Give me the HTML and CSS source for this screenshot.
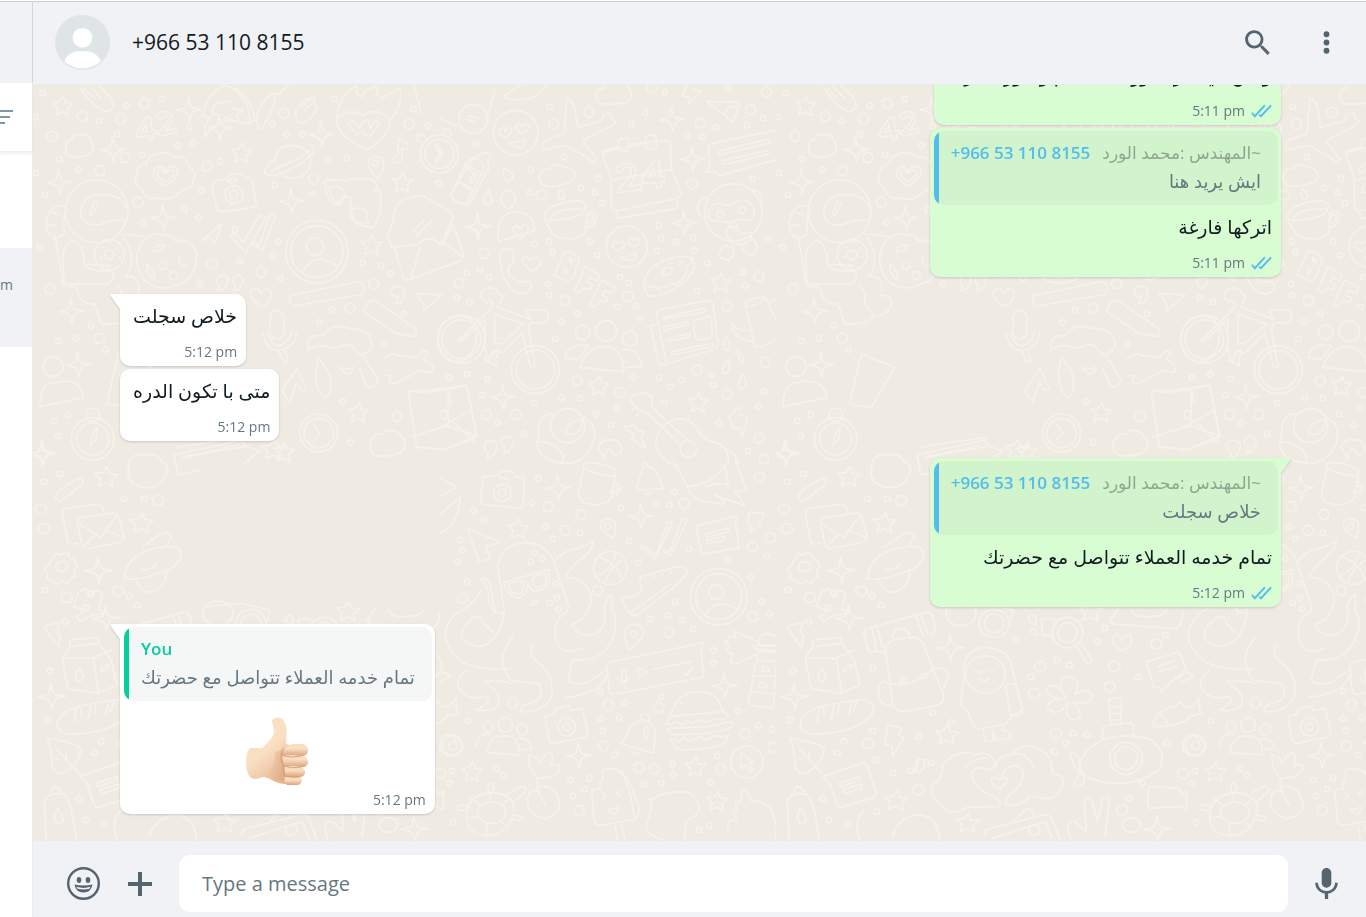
FILE: index.html
```html
<!DOCTYPE html>
<html lang="en">
    <head>
        <meta charset="utf-8">
        <title>+966 53 110 8155</title>

        <link rel="stylesheet" href="styles.css">
    </head>

    <body>

        <!-- edge of the chat list -->
        <aside class="sidebar">
            <div class="sidebar-header"></div>
            <div class="sidebar-search">
                <button class="icon-button filter-button" aria-label="Filter chats">
                    <svg width="13" height="16" viewBox="0 0 13 16"><path d="M0 2h13M0 8h10M0 14h5"/></svg>
                </button>
            </div>
            <div class="sidebar-item"></div>
            <div class="sidebar-item selected"><span>m</span></div>
        </aside>

        <main class="chat">
            <header class="chat-header">
                <svg class="avatar" viewBox="0 0 55 55">
                    <clipPath id="avatar-clip"><circle cx="27.5" cy="27.5" r="26"/></clipPath>
                    <circle cx="27.5" cy="27.5" r="27.5" fill="#dfe5e7"/>
                    <circle cx="27.5" cy="22.7" r="9.8" fill="#fff"/>
                    <path clip-path="url(#avatar-clip)" d="M9 46.5C12 39 18 36 27.5 36S43 39 46 46.5V55H9z" fill="#fff"/>
                </svg>
                <h1>+966 53 110 8155</h1>
                <button class="icon-button" aria-label="Search">
                    <svg width="33" height="33" viewBox="0 0 24 24"><path d="M15.9 14.3H15L14.7 14c1-1.1 1.6-2.7 1.6-4.3C16.3 6 13.3 3 9.6 3S3 6 3 9.7s3 6.7 6.7 6.7c1.6 0 3.2-.6 4.3-1.6l.3.3v.8l5.1 5.1 1.5-1.5zM9.7 14.3a4.6 4.6 0 1 1 0-9.2 4.6 4.6 0 0 1 0 9.2z"/></svg>
                </button>
                <button class="icon-button" aria-label="Menu">
                    <svg width="33" height="33" viewBox="0 0 24 24"><circle cx="12" cy="6" r="2.1"/><circle cx="12" cy="12" r="2.1"/><circle cx="12" cy="18" r="2.1"/></svg>
                </button>
            </header>

            <section class="messages">
                <!-- wallpaper: one tile, repeated to the right -->
                <svg class="wallpaper" aria-hidden="true">
                    <defs>
                        <marker id="dot" markerUnits="userSpaceOnUse" markerWidth="30" markerHeight="30" refX="15" refY="15"><circle class="doodle" cx="15" cy="15" r="8"/></marker>
                        <marker id="ring" markerUnits="userSpaceOnUse" markerWidth="44" markerHeight="44" refX="22" refY="22"><circle class="doodle" cx="22" cy="22" r="15"/></marker>
                        <marker id="star" markerUnits="userSpaceOnUse" markerWidth="80" markerHeight="80" refX="40" refY="40"><path class="doodle" d="M42 9l7 20 22 2-17 15 4 22-19-12-20 10 6-22-16-15 22-3z"/></marker>
                        <marker id="spark" markerUnits="userSpaceOnUse" markerWidth="90" markerHeight="90" refX="45" refY="45"><path class="doodle" d="M43 8q3 30 12 33l27 5q-25 3-29 11l-8 27q-2-25-11-28L8 47q26-3 29-10z"/></marker>
                        <pattern id="doodles" width="743" height="758" patternUnits="userSpaceOnUse">
                            <!-- upper left -->
                            <g class="doodle" transform="translate(-3 -1) scale(.3333)">
                                <path class="rings" d="M157 98L343 58 272 105 66 157 285 220 209 260 531 247 851 285 325 355 1137 120 545 540 693 565 1031 600 60 615 208 763 1101 998 763 88 960 673"/>
                                <path class="dots" d="M38 27L395 45 478 128 262 150 489 178 444 184 88 225 147 257 336 212 571 232 15 100 728 120 771 150 818 150 913 45 1151 75 1193 125 895 230 950 222 734 303 846 330 514 320 464 376 507 402 340 417 615 437 745 472 730 515 630 530 510 600 751 583 29 490 45 332 18 268 290 65 207 110 1226 298 1082 570 998 537 1053 545 85 770 137 763 183 725 227 797 1062 780 1121 690 1257 880 1312 870 939 952 961 1075 868 715 907 677 113 992 73 1010 84 1057"/>
                                <path class="stars" d="M98 67L635 208 1118 297 1025 485 985 987 762 1105"/>
                                <path class="sparks" d="M478 75L250 195 570 130 875 150 88 292 785 350 400 400 125 680 145 840 1345 425 40 1105"/>
                                <!-- meteor, cloud, 42, badge -->
                                <path d="M150 10Q180 55 210 75Q235 90 250 70Q250 40 205 5M165 15l30 30M180 8l35 35M110 200q-10-30 15-33q5-20 30-15q30 2 28 22q15 25-5 38q-45 15-68-2q-8-10 0-30z"/>
                                <path d="M350 100l-32 48 4 12 34-6 4 14 12-3-2-14 12-2-2-10-13 1-5-40zM348 122l3 20-17 3zM378 98q15-24 42-10q20 20-15 52l32-8 3 14-52 10q-6-8 4-18q26-25 26-36q-12-10-24 4z"/>
                                <path d="M365 215q40-20 70 5q35-5 38 25q30 20 17 45q-2 28-32 27q-35 40-70 25q-45 10-52-28q-28-15-18-42q5-32 32-32q-2-18 15-25z"/>
                                <path d="M405 305q-45-25-32-48q14-20 33 4q16-24 36-6q10 25-37 50zM407 293q-32-20-23-32q12-10 22 9q14-20 26-8q5 13-25 31z"/>
                                <!-- camera, planet, rocket, dart -->
                                <path d="M560 290l30-5 5-12 40-6 10 12 20 3 14 80q-5 8-15 9l-90 12q-10 0-14-8l-14-70q0-10 14-15z"/>
                                <circle cx="612" cy="332" r="27"/><circle cx="612" cy="332" r="12"/><path d="M592 292q14-12 30-5q-12 14-30 5"/>
                                <path d="M733 235q5-55 60-50q45 8 50 45q-5 45-45 52q-30 2-45-12M840 185q20 5 8 25-55 50-120 65-28 0-22-18 8-20 26-30M838 198q5 12-115 63"/>
                                <path d="M585 5q75 10 90 105-20 15-70 0-50 0-80 50-5-35 15-60l-22-5Q530 25 585 5zM600 10q60 30 60 110M555 60l45-10 10 25 30 5-20 15 10 20-45-15-10 22-10-30-20-5zM685 80q20-50 55-50-10 50-45 105-12 0-15-25zM745 30l50-40"/>
                                <!-- flaming heart, peanut, notes, pin, stopwatch -->
                                <path d="M1010 198q-105-50-88-105Q935 20 980 8q-5 25 15 30 10-25 45-30-3 30 15 35l55-30q10 50-30 95-10 65-70 90M1000 95q-40-25-72 5M1000 95q40-30 75 10M955 118l18-6 16 22 10-24 16 2 6 22 14-24 16 5-30 42-15-3-8-15-18 15z"/>
                                <path d="M800 75q15-15 30-30l25-10-5 25 12 8q-10 40-50 50-20-8-12-43zM815 70l30-30M825 78l30-30M1090 232q0-18 15-20v-48l25 12q10 10-2 22l-12-8v35q-10 18-26 7z"/>
                                <path d="M1045 285q-32-25-30-50 8-22 32-16 20 10 13 35zM1175 175l-14-5 2-16 18-2 8 12M1240 150q-3-16 12-15 18 8 8 20"/><circle cx="1036" cy="238" r="9"/><circle cx="1228" cy="210" r="57"/><circle cx="1228" cy="210" r="44"/><path d="M1215 185l18 28-20 18M1220 180l20 34-24 24"/>
                                <!-- party mask glasses, envelope -->
                                <path d="M885 300q5 40 25 62 25 5 32-22 30-10 18 30-2 50 40 55l30 5q30-45 20-110l-18 0q20-20-10-35-50-5-75 5l-55-3q-10 2-7 13zM898 310q40-10 45 20-3 25-25 25-20-15-20-45zM965 375q35-8 45 10l5 30q-48 12-50-40z"/>
                                <path d="M1090 410q0-50 35-65l50-12 85 50q15 10 5 30l-30 70-20-15q-30-10-50 12l-80 10-12-35zM1092 490l30 95q10 5 20 0l150-55q10-8 8-20l-30-90-35 65M1142 585l30-95M1235 470l65 50M1150 440l30-30M1160 455l45-45"/>
                                <!-- tube of cream -->
                                <path d="M1262 335l45-95q15-22 35-15l15 10q10 20-5 40l-45 88q-25 0-45-28zM1285 295l45 28M1305 250l45 28"/>
                                <!-- astronaut with pizza -->
                                <circle cx="200" cy="382" r="94"/><path d="M290 410q-50-5-80 12-50 5-58-30 0-60 65-60 60 0 72 40M180 390l12-35q10-5 12 5l-15 32q-8 4-9-2zM105 365q-45-5-55 45-5 40 30 60M65 385l28 8M52 425l30-2M78 465l25-15q-5-60 10-75M75 455l25 150 35 5M130 470q-35 15-32 60l5 70h130q25-15 15-40-70 5-85-18 0-60-30-72M165 540l75 5M140 605q5 60 55 55l20 60q80 5 85-30l-25-30q5-45-15-55M275 450q50 60 15 130M285 450l60 8M285 575q50 0 40 60 35-5 30 30-15 30-50 32"/>
                                <circle cx="238" cy="512" r="45"/><circle cx="238" cy="512" r="14"/><path d="M215 490h6M240 475v5M262 490l-4 4M212 520h5M265 520h5M235 545v5"/>
                                <path d="M340 470q30-30 75-15 15 0 20 15 55-10 65 45-5 75-55 85-60 30-105-15-40-60 0-115zM370 500q5-20 35-15l-8 10-25 10zM350 540q0 40 25 45-5-30-25-45zM430 465l20 10M450 520q-10 30 20 25"/><circle cx="398" cy="545" r="11"/><circle cx="430" cy="575" r="12"/>
                                <!-- plane, ticks, profile, quotes, heart -->
                                <path d="M515 470l60-50-20 60-15-20zM600 455l15-8 25 28 50-82 18 8-60 105zM665 480l10-8 12 15 35-100 16 6-40 105zM565 580q10-15 28 0 5 35-30 40l5-15q-12-8-3-25zM610 580q18-15 30 5-5 35-30 35l6-18q-14-8-6-22zM695 668q-45-30-30-50 18-15 28 12 15-25 30-8 5 30-28 46z"/>
                                <circle cx="861" cy="503" r="94"/><circle cx="861" cy="503" r="78"/><circle cx="855" cy="488" r="26"/><path d="M818 560q30-45 70-30 30 8 35 20"/>
                                <path d="M780 635l205-42q22 5 18 25-5 15-15 15l-195 33q-20-5-13-31zM805 645h4M830 640h4M857 635h4M885 630h4M1082 620q10-20 35-10 20 20-10 50l-10-2 8-20q-20 0-23-18zM1158 628l78 5-55 48v-20zM1001 683q5-30 30-36l130 90-5 20-60-10z"/>
                                <!-- mic, sheep, spanner, user -->
                                <rect x="720" y="680" width="42" height="85" rx="21"/><path d="M698 745q10 55 50 55 50-10 52-55M712 745q10 40 38 40 30-10 35-42M745 800l18 35 12-3-10-33M835 800q-10-50 45-45 20-40 75-22 75 0 70 55-15 30-45 20-5-25-35-28-30 20-60 5-40 0-50 15zM865 820q-15 50 0 100l20 22q30-20 10-80zM1000 815l45 75q-15 30-35 15l-20-50M925 850q20 10 45 0-10 40-45 0"/>
                                <path d="M1060 830q20-30 45-15l55 5 20-20 15 5-15 20 30 20-5 20-35-5-75 40-20-5 10-20-20 0M1225 765q0-60 65-70 55 10 50 60-5 70-60 80-50-10-55-70zM1290 765l60-60"/>
                                <circle cx="69" cy="848" r="30"/><path d="M30 968q0-70 40-72 80-20 92 45zM230 960l35-150 100 40-70 120z"/>
                                <circle cx="188" cy="1065" r="64"/><circle cx="188" cy="1065" r="48"/><circle cx="188" cy="992" r="20"/><path d="M180 1085l5-30 18-25-5 35z"/>
                                <!-- arrow, stopwatch, map, cloud -->
                                <path d="M755 920l45-65 30 60-15 5-15-25-20 60zM1135 925q30-12 65 0l110-20 30 150-90 40-90-5zM1255 930v100M1140 1060l110-35 90 30M1240 1005q-15-15 0-28 20 5 8 25zM1020 1080q10-35 40-30 10-20 40-5 25 15 25 35 0 30-50 35-60 10-55-35zM440 1090l200-30q-15 25 50 40l-50 40M470 1115l180-28"/>
                                <circle cx="866" cy="1047" r="57"/><circle cx="866" cy="1047" r="44"/><path d="M850 1020l20 28-20 22"/>
                            </g>
                            <!-- upper right -->
                            <g class="doodle" transform="translate(407 -1) scale(.3333)">
                                <path class="rings" d="M447 85L341 120 635 12 979 25 781 117 932 77 756 300 133 508 376 650 564 638 861 668 412 890 539 925 771 858 975 835 228 992 139 992 958 1063 972 1125 57 597 861 932 304 333 957 578"/>
                                <path class="dots" d="M329 68L575 118 616 85 675 24 970 103 921 124 828 130 788 158 741 155 372 219 107 180 272 258 474 283 423 312 465 325 486 358 270 325 937 284 984 463 656 424 664 462 707 474 760 461 650 500 764 500 802 537 471 513 450 472 327 472 283 481 337 505 325 600 328 634 540 580 566 597 532 668 587 666 600 702 412 690 363 713 346 764 89 654 50 641 80 566 120 557 147 580 907 564 915 605 771 621 865 15 658 881 725 887 692 908 673 955 815 873 821 902 532 972 468 990 513 1022 365 941 419 943 283 957 577 880 27 880 81 871 143 885 127 934 173 1017 253 1050 971 922 956 968 837 1018 924 1101"/>
                                <path class="stars" d="M843 597L476 907 775 957"/>
                                <path class="sparks" d="M697 105L758 223 733 415 113 427 190 937"/>
                                <!-- ticket, smiley, plane, cloud -->
                                <path d="M165 20L145 90M0 105l55 20M-80 0l25 90M190 40q60-60 130-35-45 60-130 35zM470 40q-5-25 25-30M470 45q10 20 50 15 60 0 55-30L565 5M740 5l-15 30 25 5-5 22 38-40-22-5"/>
                                <circle cx="100" cy="104" r="43"/><path d="M85 95l28 8M82 107l28 8"/>
                                <circle cx="227" cy="146" r="67"/><path d="M195 162q-25-12-17-26 12-8 18 5 10-18 20-5 0 14-21 26zM246 148q-25-12-17-24 12-8 18 5 10-15 20-3 0 14-21 22zM204 177q25 0 52-12-5 45-52 12z"/>
                                <path d="M380 45q25-5 32 85l75-20q-5-20 25-23l5 18q20 5 2 18l-90 47 40 55-5 12q-40-30-85-52l-70 12q-8-20 15-32l48-15z"/>
                                <path d="M300 285q-5-30 30-30 15-25 45-5 30 0 30 30-15 25-85 28-15-3-20-23zM193 252q-10 30 10 38 22-2 14-20zM145 318q-20 25-12 40 20 10 25-10zM360 315q-12 25 5 32 18-10-5-32z"/>
                                <!-- calendar -->
                                <path d="M487 200l45-10M570 182l45-8M650 170h40l5 90 30 70q-5 10-15 13l-180 38q-15 0-16-15l0-80-28-80zM516 288l180-32M530 385l5 18 175-30 3-20"/>
                                <rect x="536" y="163" width="32" height="40" rx="10"/><rect x="617" y="154" width="32" height="40" rx="10"/>
                                <path d="M530 265q-5-28 35-28 45 15 0 70l38-5 3 14-68 10 0-14q50-45 30-62-18-5-24 15zM605 285l38-57 14 0 5 50 12 0v14l-12 3 2 14-14 2-3-15-40 2zM625 278l20-3-3-26z"/>
                                <!-- speech bubble, paper plane -->
                                <path d="M805 190q2-10 12-12l185-38q12 0 14 12l14 60q0 10-12 13l-180 50-12-14-28 4 12-20zM840 200l145-34q12 5 0 12l-145 34q-8-4 0-12zM850 230l130-30q12 4 0 12l-125 30q-12-4-5-12zM800 52l100 3-20 60zM855 90l15-25 22 10"/>
                                <!-- monkey -->
                                <circle cx="880" cy="385" r="86"/><path d="M800 340q-30 5-25 40 5 20 18 22M930 315q45 5 35 55M805 390q5-45 60-25 60-40 78 15-5 30-10 30l-30-5-30 10-60-5q-10-10-8-20zM860 440q5-20 25-10l20 20 30-5q0 40-50 35-30-15-25-40zM860 410l20 30M880 410l15 22M855 485q-25 15-15 35 40 25 42-30zM905 480q5 40 40 30 15-30-10-45"/><circle cx="841" cy="390" r="10"/><circle cx="908" cy="378" r="10"/>
                                <!-- bottle, person, cup, phone -->
                                <path d="M32 330l60-95q15-20 32-25l15-5 14 10-10 15 5 20-60 110q-40 5-56-30zM60 295l50 25M88 248l48 25M90 295q0-18 15-25 8 20-15 25zM205 375q-25-15-22-35 10-30 38-15 15 30-16 50zM175 440q5-60 60-55 50 5 48 55l-105 32q-8-8-3-32zM240 465q-30-30-15-40 10 0 14 10 14-22 25-10 5 20-24 40z"/>
                                <path d="M313 400q0-30 60-45 60-12 64 10-5 35-65 40-55 12-59-5zM330 400q30-30 95-25M315 412l30 45q60 20 90-10l8-65M438 390q30-20 32 10-5 30-35 30M440 405q12-25 20-5-3 20-20 15M180 500q30-15 40 5v30q-25 15-10 40l25 20q40-10 40 15-15 30-50 15-50-40-45-125zM273 562q-35-35-22-42 14-4 18 10 15-15 33 0 5 20-29 32z"/>
                                <circle cx="560" cy="488" r="62"/><path d="M535 500q-25-10-17-25 12-6 18 5 10-12 18-3 0 14-19 23zM582 488q-25-10-17-22 10-8 17 4 10-14 17-3 0 14-17 21zM542 520q25 0 48-12-5 35-48 12z"/>
                                <!-- BFF -->
                                <path d="M373 505q10-8 35 8 20 18 0 35 0 30-22 42-20-2-42-18zM388 520l12 10-8 10zM372 550l12 8-8 12zM436 548l42 25-7 18-25-10-5 14 16 8-7 14-14-5-20 15-12-7zM485 588l40 22-5 18-25-8-8 14 18 8-5 12-18-5-18 20-14-6z"/>
                                <!-- donut -->
                                <path d="M612 600q5-65 110-83 50 0 40 40-45 70-125 80-20 0-25-37zM618 602l10 8 14-5 14 12 12-10 14 5 8-15 18 5q40-30 30-55 25-10 20-25M665 570q5-25 32-18-5 30-32 18zM650 550l6-8M690 535l8 4M715 545l6-5M720 530l8 4M645 580l5 5"/>
                                <!-- bicycle -->
                                <circle cx="64" cy="766" r="72"/><circle cx="64" cy="766" r="58"/><circle cx="286" cy="857" r="72"/><circle cx="286" cy="857" r="58"/>
                                <path d="M64 762l85-85q20-25-5-28l-5 8-18-20q10-35 45-22l22 24-15 30 100 38-15-25 10-5h50q15 20 0 38l-45 2-8 15 20 115q-8 12-14 0l-25-100-60 60-20-5-15 25q-10 12-15 0l5-20-8-12 3-90-70 65q-15 5-12-8zM165 690l85 30-65 60-20-2zM140 830l20-30 18-2-12 30 5 18z"/>
                                <!-- group, newspaper -->
                                <circle cx="428" cy="745" r="22"/><circle cx="499" cy="741" r="31"/><circle cx="570" cy="764" r="22"/><path d="M420 850q20-65 80-62 55 10 50 75zM375 820q10-45 70-35l-30 42zM545 798q50-10 60 50l-45 2M650 690q0-10 12-14l140-26q15 0 18 12l15 120q0 12-10 14l-155 48q-12-2-15-12l-23-105q0-5 22-6zM655 720l25 120M670 700l122-27q8 5 0 12l-120 20zM670 730l75-18v10l-72 18zM685 763l65-15v10l-62 14zM695 803l125-26v10l-122 26zM765 710l40-14q10 0 12 60-5 10-45 12-8-5-12-55z"/>
                                <!-- watering can -->
                                <path d="M917 660q10-20 60-20 0 15-60 30zM917 668l28 120h20l65-30-50-112M990 655q30-20 40 5v75M1005 665l12 5v50M930 740q-40 0-55-20 5 45 70 55M860 758q-15 30-5 40 20 0 14-25zM893 798q0 25 12 38 16-10-12-38zM868 825q-30 30-14 45 20-5 14-45zM908 870q-20 35-5 45 28 0 5-45z"/>
                                <!-- map, penguin, bolts, guitar -->
                                <path d="M-65 925l65-10 80-12 30 155-8 8-105 35M25 920l10 40M0 1030l95-50M45 1020l60 55M135 1075q20-15 37 5 0 35-30 45l3-20q-18-10-10-30zM185 1065q20-20 35 5-5 35-28 38l3-20q-18-3-10-23z"/>
                                <circle cx="383" cy="1025" r="51"/><path d="M340 990q-50-5-44 80M430 1000q45 20 30 80-40 80-120 50M290 1072q50 0 75 35 15 25-10 30-65-15-65-65zM375 1050q5-35 50-45 5 40-25 45zM550 1028l35-5 10 18 18 0-10 18 15 34-45-30 10-10zM897 968l-30 30 12 35 20 0 8 28 16-65h-20zM475 1090q5-25 40-23 30 0 30 35-25 25-30-5-25-5-20 30z"/>
                                <path d="M605 930q25-10 30 15l0 25 115 105M620 985l95 90M605 930q-35 0-32 20 15 35 50 35M612 930l8-5M628 940l8-5M580 975l-6 8M595 988l-5 8M665 1030q60-50 105 0 10 35 70 50 30 20 25 60M650 1090q15 40 60 60M845 1090q40 10 50 50M660 1040q-20 30-10 60"/><circle cx="745" cy="1095" r="25"/>
                            </g>
                            <!-- lower right -->
                            <g class="doodle" transform="translate(407 375) scale(.3333)">
                                <path class="rings" d="M325 140L423 164 375 211 958 51 937 260 992 233 474 392 68 415 686 517 938 470 505 735 656 742 915 821 1000 862 490 858 597 923 643 927 842 927 218 729 418 1052 732 130"/>
                                <path class="dots" d="M295 55L102 153 133 180 59 241 67 271 53 306 276 128 316 200 420 218 338 236 543 143 648 134 688 135 703 95 568 243 595 309 747 266 862 298 932 351 980 289 82 365 348 372 350 414 357 447 329 428 705 427 631 477 686 466 727 480 760 507 965 424 988 461 820 571 820 610 895 753 481 694 664 710 553 728 481 776 538 773 488 812 84 783 525 884 170 927 191 945 37 933 28 970 398 1007 433 988 391 959 449 955 697 912 832 887 614 972 664 969 699 946 812 967 955 797 996 808 778 1110 808 1097 39 1087 285 278 307 296 272 304"/>
                                <path class="stars" d="M235 208L767 922 97 937 832 1025"/>
                                <path class="sparks" d="M355 82L604 167 855 675 417 885"/>
                                <!-- camera, mug, bell, guitar end -->
                                <path d="M130 50l45-3 5-12 38 0 8 15 28 5-5 85-10 4-110-10-8-12z"/><circle cx="187" cy="98" r="26"/><circle cx="187" cy="98" r="11"/><path d="M180 53l28 5M430 10q50-8 97 20 5 15-10 20-45-5-85-25zM430 30l-15 75q5 25 40 28 50 5 60-25l12-65M520 65q25 5 22 25-8 22-30 20M515 80q20-10 18 10-10 18-22 2M590 90q10-65 30-72 25 5 35 30l15 38zM605 18q10-20 20 0M610 98q15 12 25-2M700 0l40 75q10 45 60 50l50 8 5-8-30-20 90 32-30-45 35 0-20-50-15-45M745 80q70-5 110-65l10 60-35-5-35 10"/>
                                <path d="M0 55l50 25-50 30M0 220q60-30 60-110L0 165M82 205l95 40q-5 8-40 15l15 35-35 12zM480 190q15-25 45-5 5 20-5 50-40-20-40-45z"/><circle cx="503" cy="198" r="9"/>
                                <!-- octopus -->
                                <path d="M173 320q10-70 90-72 70 5 85 80l35 100q10 25-20 40-30 35-10 85 20 35 75 10M173 320l20 130q-10 100-80 110-70-15-40-60 45-60 60-5l25 20M190 460q-45-5-45-50 5-30-25-55 30-10 35 45l10 60M125 390q-30 50-75 70Q-25 530 65 605q60 30 150 20M220 530q-60 60-10 130 60 10 85 10 20 40-10 55-50 10-40 30 60 5 90-45 10-70-50-110-20-20-5-50M80 630q-50 40-10 70 20 20 70 10 20 10-30 40 80 10 65-45-10-20-45-40 50-5 85 5M345 303q20-30 75-40l40-20q0 30-45 60-40 40-35 50 60 0 75 60-10 70-60 80 20 40 65 30 35-10 35-60-10-35 20-60 5 30 0 50 25 30 0 90-40 70-115 55l-15 60q10 20 60 10 40-30 60-40-10 60-80 75-30 10-50 8"/>
                                <path d="M190 368l138-40v40q-10 25-45 25-15-5-20-25 0 40-30 47-35-10-43-47zM205 375q20-15 45-10 5 35-20 38-20-5-25-28zM275 355q20-15 45-12 0 40-25 40-18-5-20-28zM272 435q5-18 22-15-5 18-22 15"/>
                                <!-- ball, ticks, note, shoe, profile -->
                                <circle cx="511" cy="324" r="50"/><path d="M475 290q60 20 70 70M470 345q40-5 60-70M495 372q10-50 50-70M600 262l8-6 40 30 35-98q10-5 14 2l-50 105zM675 270l15 5 35-95q10-10 17 0l-48 105-25-8zM768 198l125-30q-10 15-5 30l10 65-112 20zM795 222l70-18v12l-65 16zM798 242l55-12v12l-52 8z"/>
                                <path d="M602 350l100-28q45-8 38 20l-50 50-105 77q-30-10-38-55 45 0 60-25 0-10-8-20zM575 455l120-85M640 345l5 8M665 338l5 8M690 332l5 8"/>
                                <circle cx="836" cy="410" r="85"/><circle cx="836" cy="410" r="69"/><circle cx="829" cy="397" r="22"/><path d="M798 460q35-50 95-10"/>
                                <path d="M927 158h45l-5 20-10 10 5 8-32 22 5-22-12-5zM555 530q-5-35 30-37 30 5 25 30-10 25-45 47z"/><circle cx="580" cy="522" r="9"/>
                                <!-- voice message, lighthouse -->
                                <path d="M500 620q0-12 12-14l280-58q-10 15-10 30l10 65q0 8-10 10l-260 50q-10 0-14-10zM545 630q8-5 14 5l0 25q-8 8-14-5zM532 655q20 30 38-5M552 675l2 10M593 623l28 12-25 18zM640 628l115-24M735 640l5 5 12-20M745 642l15-18"/>
                                <path d="M960 530q20-20 50 0l5 25-60 0zM942 558h82v15l-78-5zM955 575l-30 150q0 15 75 18l12-165zM950 600l60 5M945 648h62M930 695l70 7M955 545l-75-32 10 20-22-5-5 15-10 5 15 10-10 15 22 10-10 25 15 5 65-30M965 635q5-30 22-5v5zM958 683q5-30 22-5v5z"/>
                                <!-- group, camera, bell, burger -->
                                <circle cx="144" cy="800" r="15"/><circle cx="196" cy="795" r="22"/><circle cx="247" cy="808" r="16"/><path d="M142 878q5-55 60-50 40 5 35 57zM108 858q5-40 45-35M232 835q35-5 43 30l-30 5M315 770l28-8 3-15 40-10 5 15 35-8 18 75-8 12-100 20-8-8z"/><circle cx="380" cy="801" r="27"/><circle cx="380" cy="801" r="11"/>
                                <path d="M540 850q20-15 25-40 15-25 50-30 35 15 30 50l-5 50zM603 778q-5-20 12-18 20 5 12 20M575 870q10 20 28 8M618 800q12 0 3 35-15 0-3-35M690 770q20-75 85-75 60 0 72 60zM690 770l-12 20 15 5 15-10 18 10 15-12 15 8 20-12 25 8 25-12 20 5 20-12-20-20M682 805l120-5 70-15q15 10-5 20l-65 15-110 5zM690 840l15-5 10 12 18-15 20 12 25-15 20 12 30-15 20 5 20-8-10 20-12 10q-50 20-130 15-10-5-18-20zM720 727h5M767 715h5M798 717h5M748 738h5"/>
                                <circle cx="38" cy="857" r="30"/><circle cx="38" cy="857" r="13"/>
                                <!-- radish, turtle, ice lolly, cursor -->
                                <path d="M290 955q-30-40-22-70 25 5 30 25 15-30 35-32 10 20-2 40 20-10 30 0-5 35-55 35zM293 955q-10 35 25 78M295 995q-40-15-30 50 50 60 95 0-5-75-65-65zM80 1070q-5-60 70-72 70 0 73 50-15 80-85 78-60-5-58-56z"/><ellipse cx="155" cy="1058" rx="43" ry="32"/><path d="M85 1050q-40 5-32-12 15-8 35 5M145 995q-5-25 8-25 10 5 8 25M205 1000l40-22q18 5 10 20l-35 28M222 1065q35 5 25 18l-35-5M120 1035l-30-20M150 1025v-28M185 1035l25-20M110 1070l-30 5M140 1090v35M185 1085l20 20"/>
                                <path d="M485 930q35-10 60 5 35 40 53 115-5 30-15 28l-100 18q-15 0-20-10l-8-95 25-5 0-15q15-15 5-41zM535 930q30 20 48 140M525 1098l8 45M545 1095l10 45M485 1000l12 8-10 10M540 992l-12 8 12 8M502 1045q20 5 32-5-5 45-32 5zM620 1020l25-5q10-15 80-20 50 5 52 50-5 25-35 35-8 5-8 60M635 1020q0 30-10 55-20 50 45 65"/>
                                <circle cx="921" cy="906" r="48"/><path d="M903 878l38 30-14 3 12 20-10 5-12-22-14 13zM865 1110q-10-30 25-30l-10-20 10-10-5-20 20-10q-5-20 5-30 20 10 25 35 30-5 40 10 20 0 25 35 15 20 5 70"/>
                            </g>
                            <!-- lower left -->
                            <g class="doodle" transform="translate(0 355) scale(.376 .3333)">
                                <path class="rings" d="M21 207L29 266 227 453 90 472 333 182 703 679 900 679 686 759 744 880 1083 1001 244 911 379 1050 921 1110 887 741 1012 612"/>
                                <path class="dots" d="M73 102L30 125 243 176 296 176 32 450 154 462 141 504 279 496 256 469 86 545 45 693 257 685 37 840 257 873 379 889 181 904 163 938 269 960 311 999 124 1077 190 1153 141 1140 268 1115 413 968 467 847 417 818 637 598 747 659 677 710 780 675 855 603 828 884 790 880 771 910 740 935 874 564 963 712 1040 908 973 1030 938 1075 1036 585"/>
                                <path class="stars" d="M195 112L289 250 455 885 320 1083 510 1150 838 515 640 30"/>
                                <path class="sparks" d="M25 40L175 390 195 533 465 622 50 768 1015 1165"/>
                                <!-- compass, bubble, cloud, clip -->
                                <path d="M255 80q0-45 50-35 30-5 35 20 30 10 10 50-30 45-75 20-30-15-20-55zM375 45l180-45M375 45l10 60 60-15M395 55l150-40M60 170q0-15 60-55 20 0 10 20l-55 48q-10 5-15-13z"/>
                                <!-- letters, planet, gear, milk -->
                                <path d="M78 220q0-12 10-14l85-14q15 0 17 30M78 220l15 90q10 5 25 0M118 245q0-10 10-12l85-14q12 0 15 12l15 60-8 15-90 20q-12 0-15-12zM120 250l60 42 45-68M135 320l30-35M240 293l-45-22M243 415q5-70 80-90 60-15 70 10 5 45-60 65-60 25-90 15zM290 320l50-38q30-10 28 10l-15 28M290 385q15 15 40-15M275 425q25 50 60 20 20-20 20-50"/>
                                <path d="M60 340l10 5 10-6 15 2 2 12 14 8 6 18-8 12 4 18-12 6-8 15-16-6-14 10-8-12-18-4 2-16-10-14 12-12z"/><circle cx="76" cy="380" r="16"/><path d="M122 455l20-10 10 25 15-20 18 10-10 50 20 10-40 5-30 20-8-15 20-20-30-10z"/>
                                <path d="M98 600l75-8 2 18-77 10zM98 620l-20 35 15 90 80 15 50-25-15-75-33-50M78 655h82l15 103M160 655l48-25M122 685q-18 28-2 40 25-10 2-40zM180 685l22-12v10l-20 12zM30 558l40-10-5 30 8 8-5 35-25-35z"/>
                                <!-- bread, backpack, penguin boy -->
                                <path d="M65 860q-5-40 60-62l100-20q45 10 30 45-30 45-120 58-60 10-70-21zM110 845l5-40q10-10 12 0l0 25M147 835l8-40q10-10 12 0l-2 25M192 825l10-38q12-10 12 0l-8 30"/>
                                <path d="M235 585q-5-15 10-20l155-48q15 0 18 15l5 35q0 15-10 18M235 585l12 50h45M255 565l12 65M268 560l15 60M372 525l20 65M385 520l18 60M290 620q10-25 70-28 30 0 35 30l50 140q5 30-20 35l-80 18q-30 0-35-25zM290 725q50 25 110-20l18-20M285 725q-20 10-8 60 10 10 30 10M415 685q40-5 45 20l-15 40M310 590q5-30 30-25 15 10 15 25"/><circle cx="338" cy="720" r="8"/><circle cx="392" cy="708" r="8"/>
                                <path d="M498 700q0-75 60-78 65 5 72 70l25 115q0 15-12 22l-10-5-25 28-65 15q-15 0-20-15l-15-40-12-10q-10-20 5-80zM610 740q20-20 30 0l15 70-30 20zM550 865l5 38h22l0-25M575 870l10 28h38v-22l-20-5v-15"/><ellipse cx="557" cy="703" rx="53" ry="56"/><path d="M530 700q8-10 18 0M560 695q8-10 18 0M540 715q15 15 26 0"/>
                                <!-- goggles, magnifier, paws, flower -->
                                <ellipse cx="492" cy="520" rx="40" ry="37"/><ellipse cx="580" cy="550" rx="40" ry="42"/><ellipse cx="580" cy="550" rx="26" ry="28"/><ellipse cx="775" cy="578" rx="41" ry="46"/><ellipse cx="775" cy="578" rx="26" ry="30"/>
                                <path d="M460 500l90-10 80 20-5 30M705 540q15-10 40 0M705 545l5 40 30 5M800 620l25 48q15 5 16-10l-25-42M672 530q15-10 20 5l-2 20q-20-5-18-25zM675 570q15-10 20 10-5 12-15 0zM770 775q-30-60 10-65 35 5 15 55 40-30 45 5-5 30-50 15 35 45 5 55-30 0-18-50-30 45-55 15 0-30 40-28-50-5-40-35 20-20 48 28z"/>
                                <path d="M890 540l20-35M890 540q0 10 10 12l160 14q20-5 22-50M945 510q10 25 45 20 40 0 50-20M920 632q-40-30-20-45 15-5 20 10 20-20 25-8 5 30-25 43z"/>
                                <!-- leaf, bolt, note, speech -->
                                <path d="M38 895q70 10 90 30-5 50-50 75-25 5-28-35 0-35-12-70zM60 925l50 60 12 15M75 960l-15-3M88 940v20M298 855l35 10-8 20 15 8-30 55-2-30-20-5zM350 995q0-18 20-8l5-28h22l-5 30q-20 15-20-5l5-15-10 25q-10 10-17 1zM125 1010l105-42q10 0 12 10l26 80-8 15-90 30q-8-3-25-70zM168 1030l55-20v10l-50 20zM178 1050l50-18v12l-45 18z"/>
                                <!-- heart hands -->
                                <path d="M445 970q50-50 85-25 30-15 50 15 10 20-10 30-35-15-50 5 0 50 60 75 25 20 10 30l-85 3q-30 20-50 10-55-50-38-80 25-10 28-63zM500 985q30-35 60-30M585 980q0-30 40-35 30-45 80-15 30 15 30 70 35 10 30 25-15 60-55 50-25-10-35-5-30 35-65 22 0-25 35-50 30-60-10-65-30 5-35 30M625 945q40-15 60 35M592 1045q-30-20-15-32 12-3 15 8 15-15 22-2 0 15-22 26z"/>
                                <!-- submarine, fish, gear -->
                                <path d="M810 1000q-20-20-28-60 25-5 25 30l5 30q-30 30-12 38 30 0 15-40zM808 990q-5-50 60-90 70-25 130 0 45 40 20 90-60 50-140 38-60-15-70-38zM868 895l0-25q0-10 10-12l65-10 8 8v30M890 855l-5-75q20-10 35-3l-5 75M888 800h30M890 820h28M892 840h26"/><ellipse cx="931" cy="955" rx="43" ry="48"/><ellipse cx="931" cy="955" rx="30" ry="34"/>
                                <path d="M1002 860q5-50 60-60l15-15 10 15h20l18-25q0 50 10 45l-35 10q-15 30-98 30zM1015 820q30 15 25 40M1085 900l10-15h20l8 15 15 2 5 20-8 12-18 15-18-5-15-12-2-18zM985 665l85-28q12 15 20 50l-50 50-15 20-5-15-15 0zM1015 680l45-18M1020 695l45-15M1060 720l35-25 15 15-30 15"/>
                                <!-- spray can, dog, frame, fingers, video -->
                                <path d="M35 1200l-5-120q20-25 50-18 20 5 35 138M48 1060q0-20 12-20 15 5 12 22M65 1105q-15 30 0 48 30-5 0-48zM235 1110q-30 30-12 90M310 1190q10-50 60-65 60-5 65 75M555 1185q0-15 10-18l150-43q15 0 20 15l20 61M575 1195l140-50 20 50M630 1145l35-38q15-3 20 20M785 1200q-20-60 10-55l30 30-5-95q12-15 20 0l15 65 12-65q15-15 20 0l-12 110M990 1050q0-10 12-10l65 5q10 0 10 20l15-10v55l-18-10-80 5q-8-5-4-55z"/>
                                <ellipse cx="687" cy="1170" rx="15" ry="16"/><ellipse cx="945" cy="1155" rx="25" ry="22"/>
                            </g>
                        </pattern>
                    </defs>
                    <rect width="100%" height="100%" fill="url(#doodles)"/>
                </svg>

                <article class="message out wide">
                    <p class="text" dir="rtl">وتبين لي ميزان وزن التسليم والتوريد قريبا</p>
                    <div class="meta"><time>5:11 pm</time><svg class="ticks" viewBox="0 0 22 14"><path d="M1 9l3 3.5L14.5 1M8.5 11l2 1.5L21 1"/></svg></div>
                </article>

                <article class="message out">
                    <blockquote class="quote">
                        <header><b>+966 53 110 8155</b><span dir="rtl">~المهندس :محمد الورد</span></header>
                        <p dir="rtl">ايش يريد هنا</p>
                    </blockquote>
                    <p class="text" dir="rtl">اتركها فارغة</p>
                    <div class="meta"><time>5:11 pm</time><svg class="ticks" viewBox="0 0 22 14"><path d="M1 9l3 3.5L14.5 1M8.5 11l2 1.5L21 1"/></svg></div>
                </article>

                <article class="message in first">
                    <p class="text" dir="rtl">خلاص سجلت</p>
                    <div class="meta"><time>5:12 pm</time></div>
                </article>

                <article class="message in">
                    <p class="text" dir="rtl">متى با تكون الدره</p>
                    <div class="meta"><time>5:12 pm</time></div>
                </article>

                <article class="message out first">
                    <blockquote class="quote">
                        <header><b>+966 53 110 8155</b><span dir="rtl">~المهندس :محمد الورد</span></header>
                        <p dir="rtl">خلاص سجلت</p>
                    </blockquote>
                    <p class="text" dir="rtl">تمام خدمه العملاء تتواصل مع حضرتك</p>
                    <div class="meta"><time>5:12 pm</time><svg class="ticks" viewBox="0 0 22 14"><path d="M1 9l3 3.5L14.5 1M8.5 11l2 1.5L21 1"/></svg></div>
                </article>

                <article class="message in first">
                    <blockquote class="quote">
                        <header><b>You</b></header>
                        <p dir="rtl">تمام خدمه العملاء تتواصل مع حضرتك</p>
                    </blockquote>
                    <svg class="thumb" viewBox="0 0 64 68" role="img" aria-label="Thumbs up">
                        <defs>
                            <linearGradient id="skin" x1="0" y1="0" x2=".7" y2="1"><stop offset=".5" stop-color="#fadfc3"/><stop offset="1" stop-color="#e3b089"/></linearGradient>
                            <linearGradient id="finger" x1="0" y1="0" x2="0" y2="1"><stop offset=".4" stop-color="#fadcc0"/><stop offset="1" stop-color="#dca47e"/></linearGradient>
                            <linearGradient id="shade"><stop offset="0" stop-color="#e0aa83" stop-opacity="0"/><stop offset="1" stop-color="#d9a17a" stop-opacity=".6"/></linearGradient>
                        </defs>
                        <path d="M17 31C24 24 29 20 29 14C29 9 27 7 27 4C28 0 36-1 39 4C43 11 41 20 41 27C47 29 54 28 57 31L55 66C46 68 38 67 34 66C27 64 23 60 18 60C12 62 8 63 5 60C0 54 0 38 4 32C7 30 13 32 17 31Z" fill="url(#skin)"/>
                        <path d="M30 35q7-1 9-6l1 35q-13 0-18-7 8-8 8-22z" fill="url(#shade)"/>
                        <path d="M38 39q2-11 10-12h9c8 1 8 11 1 12z" fill="url(#finger)"/>
                        <path d="M38 39q6-2 19 0c8 1 8 11 0 11H42q-5-4-4-11z" fill="url(#finger)"/>
                        <path d="M39 50q8-2 17 0c6 2 5 9 0 10H43q-4-4-4-10z" fill="url(#finger)"/>
                        <path d="M40 60h14c5 2 3 7-1 8H42q-4-3-2-8z" fill="url(#finger)"/>
                        <path d="M37 36l2 3q8 2 17 0M39 49q8 3 17 1M40 59q7 2 14 1M37 34q-3 9 2 16-1 6 1 9" fill="none" stroke="#cf946b" stroke-width=".8"/>
                    </svg>
                    <div class="meta"><time>5:12 pm</time></div>
                </article>
            </section>

            <footer class="composer">
                <button class="icon-button" aria-label="Emoji">
                    <svg width="35" height="35" viewBox="0 0 35 35">
                        <circle cx="17.5" cy="17.5" r="15.3" fill="none" stroke="#54656f" stroke-width="2.4"/>
                        <ellipse cx="13" cy="14" rx="2.3" ry="2.9"/><ellipse cx="22" cy="14" rx="2.3" ry="2.9"/>
                        <path d="M8.5 18.5q9 2 18 0-1.5 8-9 8t-9-8z"/><path d="M10.5 20.8q7 2.2 14 0l-1 2q-6 1.5-12 0z" fill="#f0f2f5"/>
                    </svg>
                </button>
                <button class="icon-button" aria-label="Attach">
                    <svg width="24" height="24" viewBox="0 0 24 24"><path d="M10 0h4v10h10v4H14v10h-4V14H0v-4h10z"/></svg>
                </button>
                <input type="text" placeholder="Type a message" aria-label="Type a message">
                <button class="icon-button" aria-label="Voice message">
                    <svg width="33" height="33" viewBox="0 0 24 24"><path d="M12 15c2 0 3.5-1.5 3.5-3.5V4.4C15.5 2.4 14 .8 12 .8S8.5 2.4 8.5 4.4v7.1C8.5 13.5 10 15 12 15zM18.2 11.4c0 3.5-2.9 6-6.2 6s-6.2-2.5-6.2-6h-2c0 4 3.1 7.3 7 7.9v3.9h2.4v-3.9c3.9-.6 7-3.9 7-7.9z"/></svg>
                </button>
            </footer>
        </main>

    </body>
</html>
```
FILE: styles.css
```css
* {
    box-sizing: border-box;
}

body {
    display: flex;
    margin: 0;
    padding-top: 1px;
    height: 100vh;
    overflow: hidden;
    background: #fff;
    color: #111b21;
    font-family: "Open Sans", "Noto Sans", "DejaVu Sans", sans-serif;
}

h1, p, blockquote {
    margin: 0;
    font-weight: normal;
}

.icon-button {
    display: flex;
    flex: none;
    padding: 0;
    border: 0;
    background: none;
    fill: #54656f;
}

/* Sidebar */

.sidebar {
    flex: none;
    width: 33px;
    border-top: 1px solid #cbd0ce;
    border-right: 1px solid #e9edef;
}

.sidebar-header {
    height: 81px;
    margin-right: -1px;
    background: #f0f2f5;
    border-right: 1px solid #d1d7db;
}

.sidebar-search {
    display: flex;
    align-items: center;
    height: 69px;
    border-bottom: 1px solid #e9edef;
    box-shadow: 0 2px 3px rgba(11, 20, 26, 0.06);
}

.filter-button {
    fill: none;
    stroke: #8696a0;
    stroke-width: 2;
}

.sidebar-item {
    height: 96px;
}

.sidebar-item.selected {
    height: 99px;
    padding-top: 26px;
    background: #f0f2f5;
    color: #667781;
    font-size: 14px;
    line-height: 22px;
}

/* Chat */

.chat {
    display: flex;
    flex-direction: column;
    flex: 1;
    min-width: 0;
    border-top: 1px solid #cbd0ce;
}

.chat-header {
    display: flex;
    align-items: center;
    flex: none;
    gap: 36px;
    height: 83px;
    padding: 0 23px 2px 22px;
    background: #f0f2f5;
    border-bottom: 1px solid #e9edef;
}

.avatar {
    flex: none;
    width: 55px;
    height: 55px;
    margin-right: -14px;
}

.chat-header h1 {
    flex: 1;
    font-size: 21px;
    line-height: 30px;
}

/* Messages */

.messages {
    position: relative;
    display: flex;
    flex-direction: column;
    justify-content: flex-end;
    flex: 1;
    gap: 3px;
    min-height: 0;
    padding: 0 85px 27px 87px;
    overflow: hidden;
    background: #efeae2;
}

.wallpaper {
    position: absolute;
    top: 0;
    left: 0;
    width: 100%;
    height: 100%;
}

.doodle {
    fill: none;
    stroke: #f5f2eb;
    stroke-width: 5;
    stroke-linecap: round;
    stroke-linejoin: round;
}

.rings, .dots, .stars, .sparks {
    stroke: none;
}

.rings {
    marker: url(#ring);
}

.dots {
    marker: url(#dot);
}

.stars {
    marker: url(#star);
}

.sparks {
    marker: url(#spark);
}

.message {
    position: relative;
    flex: none;
    border-radius: 10px;
    filter: drop-shadow(0 1px 1px rgba(11, 20, 26, 0.16));
}

.message.in {
    align-self: flex-start;
    background: #fff;
}

.message.out {
    align-self: flex-end;
    background: #d9fdd3;
}

.message.wide {
    min-width: 335px;
}

.in + .out, .out + .in {
    margin-top: 14px;
}

/* tail */
.message.first::before {
    content: "";
    position: absolute;
    top: 0;
    width: 21px;
    height: 15px;
    background: inherit;
}

.in.first {
    border-top-left-radius: 0;
}

.in.first::before {
    left: -10px;
    clip-path: polygon(0 1px, 1px 0, 100% 0, 100% 100%, 10px 100%);
}

.out.first {
    border-top-right-radius: 0;
}

.out.first::before {
    right: -10px;
    clip-path: polygon(100% 1px, 20px 0, 0 0, 0 100%, 11px 100%);
}

.text {
    padding: 7px 9px 0 13px;
    font-size: 19px;
    line-height: 30px;
}

.meta {
    display: flex;
    align-items: center;
    justify-content: flex-end;
    gap: 6px;
    padding: 11px 9px 4px;
    color: #667781;
    font-size: 14px;
    line-height: 20px;
}

.ticks {
    width: 21px;
    height: 14px;
    fill: none;
    stroke: #53bdeb;
    stroke-width: 2;
}

/* Quoted message */

.message:has(.quote) {
    padding-top: 3px;
}

.quote {
    position: relative;
    margin: 0 3px 0 4px;
    padding: 7px 17px 9px;
    border-radius: 10px;
    overflow: hidden;
    background: #d1f4cc;
    color: #667781;
    font-size: 18px;
    line-height: 29px;
}

.in .quote {
    background: #f5f6f6;
}

.quote::before {
    content: "";
    position: absolute;
    top: 0;
    bottom: 0;
    left: 0;
    width: 5px;
    background: #53bdeb;
}

.in .quote::before {
    background: #06cf9c;
}

.quote header {
    display: flex;
    justify-content: space-between;
    gap: 12px;
    height: 29px;
    font-size: 17px;
    white-space: nowrap;
}

.quote p {
    height: 29px;
}

.quote b {
    color: #53bdeb;
    font-weight: 600;
}

.in .quote b {
    color: #06cf9c;
}

.quote span {
    color: #8fa58f;
}

.thumb {
    display: block;
    width: 64px;
    height: 68px;
    margin: 16px auto -6px;
}

/* Composer */

.composer {
    display: flex;
    align-items: center;
    flex: none;
    gap: 27px;
    height: 76px;
    padding: 14px 23px 5px 33px;
    background: #f0f2f5;
}

.composer input {
    flex: 1;
    min-width: 0;
    height: 57px;
    margin: 0 -5px 0 0;
    padding: 0 23px;
    border: 0;
    border-radius: 11px;
    outline: 0;
    background: #fff;
    color: #111b21;
    font-family: inherit;
    font-size: 20px;
}

.composer input::placeholder {
    color: #667781;
    opacity: 1;
}
```
